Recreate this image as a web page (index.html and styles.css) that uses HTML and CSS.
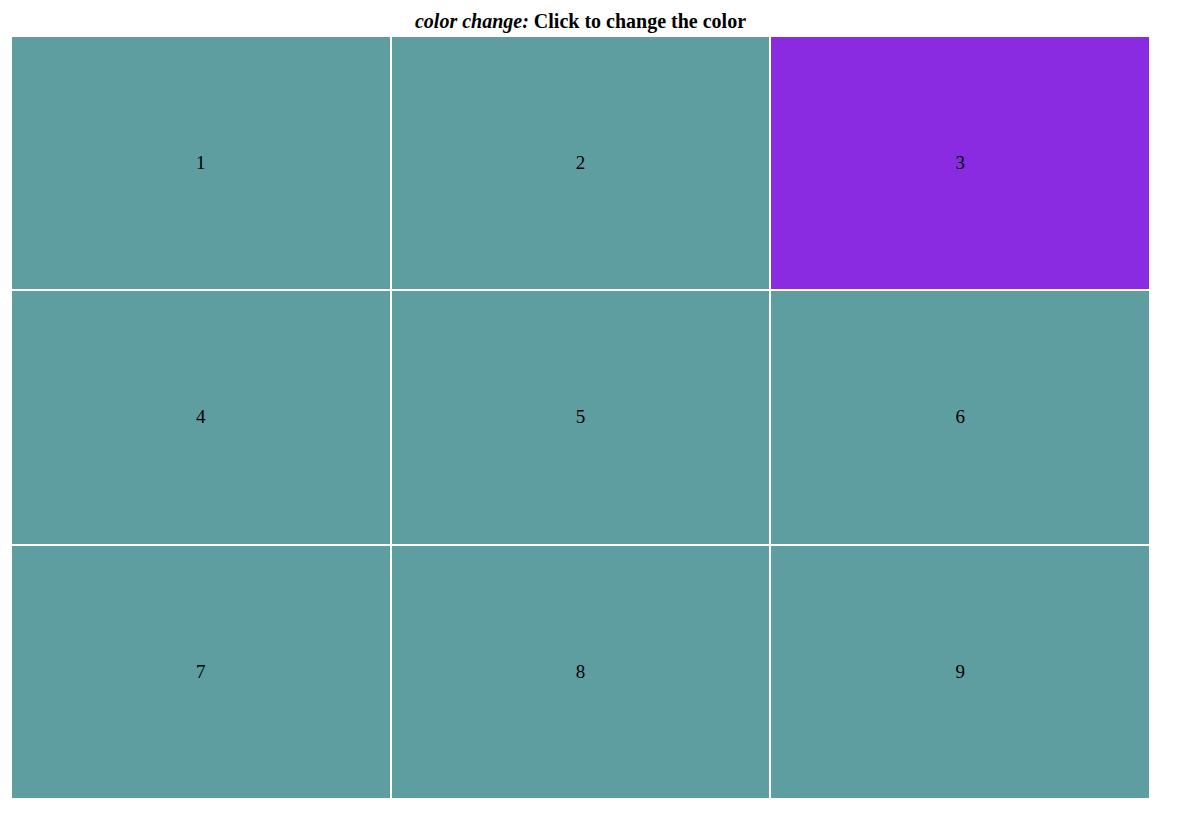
FILE: index.html
```html
<!DOCTYPE html>
<html lang="en">
<head>
  <meta charset="UTF-8" />
  <meta name="viewport" content="width=device-width, initial-scale=1.0" />
  <title>Color Change</title>
  <link rel="stylesheet" href="styles.css">
</head>
<body>
  <div class="container">
    <h3 class="title"><em>color change:</em> Click to change the color</h3>

    <div class="grid" id="grid">
      <div class="cell">1</div>
      <div class="cell">2</div>
      <div class="cell active">3</div>
      <div class="cell">4</div>
      <div class="cell">5</div>
      <div class="cell">6</div>
      <div class="cell">7</div>
      <div class="cell">8</div>
      <div class="cell">9</div>
    </div>
  </div>

  <script>
    const cells = document.querySelectorAll('.cell');

    cells.forEach(function (cell) {
      cell.onclick = function () {
        cells.forEach(c => c.classList.remove('active'));
        cell.classList.add('active');
      };
    });
  </script>
</body>
</html>
```

FILE: styles.css
```css
body {
  font-family: 'Liberation Serif', 'Times New Roman', serif;
  margin: 0;
  background: #fff;
  color: #000;
}
.container {
  width: 1137px;
  margin-left: 12px;
}
.title {
  font-size: 20px;
  text-align: center;
  margin: 10px 0 4px;
}
.grid {
  display: grid;
  grid-template-columns: repeat(3, 1fr);
  grid-template-rows: repeat(3, 1fr);
  height: 761px;
  gap: 2px;
}
.cell {
  background: cadetblue;
  display: flex;
  align-items: center;
  justify-content: center;
  font-size: 19px;
  cursor: pointer;
}
.cell.active {
  background: blueviolet;
}
```
